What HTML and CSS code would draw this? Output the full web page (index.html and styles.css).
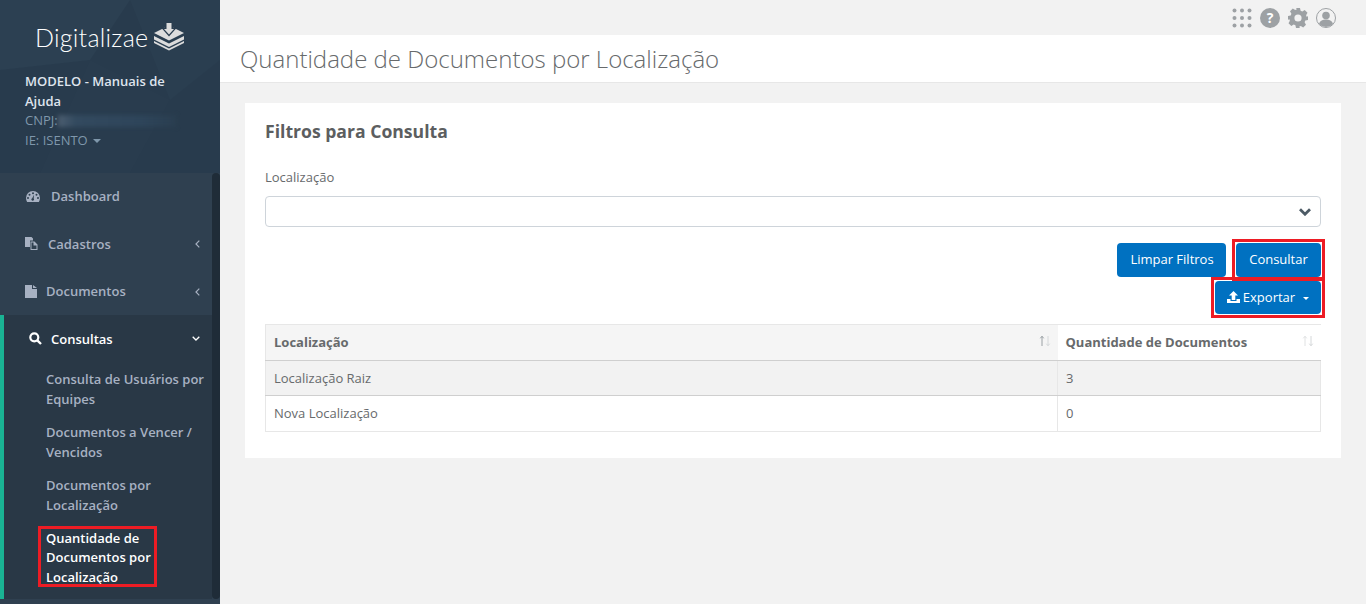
FILE: index.html
```html
<!DOCTYPE html>
<html lang="pt-BR">
<head>
  <meta charset="UTF-8">
  <title>Quantidade de Documentos por Localização</title>
  <link rel="stylesheet" href="styles.css">
</head>
<body>
  <aside class="sidebar">
    <div class="brand">
      <svg class="brand-bg" viewBox="0 0 220 173" preserveAspectRatio="none">
        <polygon points="0,0 130,0 90,60 0,70" fill="#2c4052"/>
        <polygon points="130,0 220,0 220,60 170,100" fill="#2a3e50"/>
        <polygon points="90,60 170,100 130,173 40,173" fill="#293c4e"/>
      </svg>
      <div class="logo">
        <span class="logo-text">Digitalizae</span>
        <svg class="logo-icon" viewBox="0 0 32 28">
          <polygon points="1,10 16,2.500 31,10 16,17.500" fill="#dcdcdc"/>
          <polygon points="12,0 20,0 20,4.500 24,4.500 16,13.500 8,4.500 12,4.500" fill="#2a3d4f"/>
          <polygon points="13.500,0 18.500,0 18.500,6 21,6 16,11.500 11,6 13.500,6" fill="#dcdcdc"/>
          <polygon points="1,13 16,20.500 31,13 31,16.500 16,24 1,16.500" fill="#dcdcdc"/>
          <polygon points="1,18 16,25.500 31,18 31,20 16,27.500 1,20" fill="#dcdcdc"/>
        </svg>
      </div>
      <div class="company">
        <strong>MODELO - Manuais de Ajuda</strong>
        <div class="cnpj">CNPJ:<span class="smear"></span></div>
        <div>IE: ISENTO <span class="caret"></span></div>
      </div>
    </div>
    <div class="nav-wrap">
      <nav class="nav">
        <a class="nav-item">
          <svg class="ic ic-dash" viewBox="0 0 14 11"><path fill-rule="evenodd" d="M7 0a7 7 0 0 1 7 7c0 1.500-.4 2.800-1.100 4H1.100A7.800 7.800 0 0 1 0 7a7 7 0 0 1 7-7zM7 1.300a1 1 0 1 0 0 2 1 1 0 0 0 0-2zM3.500 2.800a1 1 0 1 0 0 2 1 1 0 0 0 0-2zM2 6a1 1 0 1 0 0 2 1 1 0 0 0 0-2zM12 6a1 1 0 1 0 0 2 1 1 0 0 0 0-2zM10.500 2.800a1 1 0 1 0 0 2 1 1 0 0 0 0-2zM8 3.800 6.200 7.200a1.300 1.300 0 1 0 1.500.4z" fill="#a7b1c2"/></svg>
          <span class="lbl lbl-dash">Dashboard</span>
        </a>
        <a class="nav-item">
          <svg class="ic ic-copy" viewBox="0 0 13 13"><path d="M0 0h6.500l1.500 1.500V3.500H5V10H0z" fill="#a7b1c2"/><path d="M5.500 4.500H9.500l3 3v5.500h-7zM6.500 5.500v6.500h5V8.500H8.500v-3z" fill-rule="evenodd" fill="#a7b1c2"/></svg>
          <span class="lbl lbl-copy">Cadastros</span>
          <svg class="chev" viewBox="0 0 5 8"><path d="M4.300 .7 1 4l3.300 3.300" fill="none" stroke="#a7b1c2" stroke-width="1.200"/></svg>
        </a>
        <a class="nav-item">
          <svg class="ic ic-file" viewBox="0 0 12 13"><path d="M0 0h7v4h5v9H0zM8 0l4 3H8z" fill="#a7b1c2"/></svg>
          <span class="lbl lbl-file">Documentos</span>
          <svg class="chev" viewBox="0 0 5 8"><path d="M4.300 .7 1 4l3.300 3.300" fill="none" stroke="#a7b1c2" stroke-width="1.200"/></svg>
        </a>
        <div class="nav-open">
          <a class="nav-item active">
            <svg class="ic ic-search" viewBox="0 0 13 13"><circle cx="5.300" cy="5.300" r="4" fill="none" stroke="#fff" stroke-width="2.200"/><path d="m8.300 8.300 3.700 3.700" stroke="#fff" stroke-width="2.400"/></svg>
            <span class="lbl lbl-search">Consultas</span>
            <svg class="chev chev-down" viewBox="0 0 8 5"><path d="M.7.7 4 4 7.300.7" fill="none" stroke="#fff" stroke-width="1.300"/></svg>
          </a>
          <ul class="subnav">
            <li>Consulta de Usuários por Equipes</li>
            <li>Documentos a Vencer / Vencidos</li>
            <li>Documentos por Localização</li>
            <li class="current"><span class="mark">Quantidade de Documentos por Localização</span></li>
          </ul>
        </div>
      </nav>
      <div class="scroll-thumb"></div>
    </div>
  </aside>

  <main class="main">
    <div class="topbar">
      <svg class="top-ic" viewBox="0 0 20 20" width="20" height="20" fill="#9da1a4">
        <circle cx="2.500" cy="2.500" r="2"/><circle cx="10" cy="2.500" r="2"/><circle cx="17.500" cy="2.500" r="2"/>
        <circle cx="2.500" cy="10" r="2"/><circle cx="10" cy="10" r="2"/><circle cx="17.500" cy="10" r="2"/>
        <circle cx="2.500" cy="17.500" r="2"/><circle cx="10" cy="17.500" r="2"/><circle cx="17.500" cy="17.500" r="2"/>
      </svg>
      <span class="help">?</span>
      <svg class="top-ic" viewBox="0 0 20 20" width="20" height="20"><path fill="#9da1a4" fill-rule="evenodd" d="M8 0h4l.6 2.700 1.700.7L16.700 2l2.800 2.800-1.400 2.400.7 1.700L20 8v4l-2.700.6-.7 1.700 1.400 2.400-2.800 2.800-2.400-1.400-1.700.7L12 20H8l-.6-2.700-1.700-.7-2.400 1.400L.5 15.200l1.400-2.400-.7-1.700L0 12V8l2.700-.6.7-1.700L2 3.300 4.800.5l2.400 1.400 1.700-.7zM10 6.400a3.600 3.600 0 1 0 0 7.200 3.600 3.600 0 0 0 0-7.200z"/></svg>
      <svg class="top-ic" viewBox="0 0 20 20" width="20" height="20"><circle cx="10" cy="10" r="9.500" fill="none" stroke="#9da1a4"/><circle cx="10" cy="7.500" r="3.800" fill="#9da1a4"/><path d="M3 16c1-3.500 4-4.500 7-4.500s6 1 7 4.500a9.500 9.500 0 0 1-14 0z" fill="#9da1a4"/></svg>
    </div>
    <header class="page-title">
      <h1>Quantidade de Documentos por Localização</h1>
    </header>
    <section class="content">
      <div class="card">
        <h2>Filtros para Consulta</h2>
        <label class="field-label">Localização</label>
        <div class="select">
          <svg viewBox="0 0 12 8" width="12" height="8"><path d="m1 1.200 5 5 5-5" fill="none" stroke="#4d5b66" stroke-width="2.800"/></svg>
        </div>
        <div class="actions">
          <button class="btn btn-limpar">Limpar Filtros</button>
          <span class="mark-btn"><button class="btn btn-consultar">Consultar</button></span>
        </div>
        <div class="actions actions-export">
          <span class="mark-btn"><button class="btn btn-exportar">
            <svg viewBox="0 0 13 12" width="13" height="12"><path d="M6.500 0 11 4.500H8.300V9H4.700V4.500H2zM0 8h3.500v2h6V8H13v4H0z" fill="#fff"/></svg>
            Exportar
            <span class="caret caret-white"></span>
          </button></span>
        </div>
        <table class="grid">
          <thead>
            <tr>
              <th class="sorted">Localização
                <svg class="sort" viewBox="0 0 12 12" width="12" height="12"><path d="M3 11V1.500M1.300 3.300 3 1.200l1.700 2.100" fill="none" stroke="#9aa0a4"/><path d="M9 1v9.500M7.300 8.700 9 10.800l1.700-2.100" fill="none" stroke="#d5d8da"/></svg>
              </th>
              <th class="col-qty">Quantidade de Documentos
                <svg class="sort" viewBox="0 0 12 12" width="12" height="12"><path d="M3 11V1.500M1.300 3.300 3 1.200l1.700 2.100" fill="none" stroke="#e0e2e3"/><path d="M9 1v9.500M7.300 8.700 9 10.800l1.700-2.100" fill="none" stroke="#d5d8da"/></svg>
              </th>
            </tr>
          </thead>
          <tbody>
            <tr class="odd"><td>Localização Raiz</td><td>3</td></tr>
            <tr class="even"><td>Nova Localização</td><td>0</td></tr>
          </tbody>
        </table>
      </div>
    </section>
  </main>
</body>
</html>
```

FILE: styles.css
```css
* {
  box-sizing: border-box;
}
html, body {
  height: 100%;
}
body {
  margin: 0;
  display: flex;
  height: 604px;
  overflow: hidden;
  background-color: #f2f2f2;
  font-family: "Open Sans", sans-serif;
  font-size: 13px;
  color: #676a6c;
}

/* sidebar */
.sidebar {
  width: 220px;
  flex: none;
  display: flex;
  flex-direction: column;
  background-color: #2f4050;
}
.brand {
  position: relative;
  height: 173px;
  flex: none;
  padding: 0 25px;
  background-color: #283b4d;
  overflow: hidden;
}
.brand-bg {
  position: absolute;
  top: 0;
  left: 0;
  width: 100%;
  height: 100%;
}
.logo, .company {
  position: relative;
}
.logo {
  display: flex;
  align-items: center;
  height: 38px;
  margin-top: 18px;
  margin-left: 10px;
}
.logo-text {
  font-family: Lato, sans-serif;
  font-weight: 300;
  font-size: 25px;
  letter-spacing: 0.25px;
  color: #fff;
  width: 118px;
  white-space: nowrap;
}
.logo-icon {
  width: 32px;
  height: 28px;
}
.company {
  margin-top: 16px;
  line-height: 19.5px;
  color: #7f97ab;
}
.company strong {
  display: block;
  font-weight: 600;
  color: #dfe4ed;
}
.cnpj {
  display: flex;
}
.smear {
  width: 118px;
  height: 12px;
  margin-top: 4px;
  background: linear-gradient(90deg, #4c5e70, #334a5f 15%, #2e455a 70%, #2a3e50);
  filter: blur(2px);
}
.caret {
  display: inline-block;
  margin-left: 2px;
  vertical-align: 2px;
  border-top: 4px solid #7f97ab;
  border-left: 4px solid transparent;
  border-right: 4px solid transparent;
}
.caret-white {
  margin-left: 4px;
  border-top: 3px solid #fff;
  border-left: 3px solid transparent;
  border-right: 3px solid transparent;
}

.nav-wrap {
  flex: 1;
  display: flex;
  min-height: 0;
}
.nav {
  width: 212px;
  flex: none;
  background-color: #2f4050;
  padding-bottom: 5px;
}
.nav > :first-child {
  margin-top: -0.5px;
}
.nav-item {
  display: flex;
  align-items: center;
  height: 47.5px;
  padding-left: 25px;
  font-weight: 600;
  color: #a7b1c2;
  position: relative;
}
.ic {
  flex: none;
}
.ic-dash { width: 14px; height: 11px; margin-left: 1px; }
.ic-copy { width: 13px; height: 13px; }
.ic-file { width: 12px; height: 13px; }
.ic-search { width: 13px; height: 13px; margin-left: 4px; }
.lbl-dash { margin-left: 11px; }
.lbl-copy { margin-left: 10px; }
.lbl-file { margin-left: 9px; }
.lbl-search { margin-left: 9px; }
.chev {
  position: absolute;
  right: 12px;
  top: 20px;
  width: 5px;
  height: 8px;
}
.chev-down {
  width: 8px;
  height: 5px;
  top: 21px;
}
.nav-open {
  height: 283.5px;
  background-color: #293846;
  border-left: 4px solid #1ab394;
}
.nav-open .nav-item {
  padding-left: 21px;
}
.nav-item.active {
  color: #fff;
}
.subnav {
  list-style: none;
  margin: 0;
  padding: 0;
  font-weight: 600;
  color: #a7b1c2;
  line-height: 20px;
}
.subnav li {
  padding: 6px 4px 7px 42px;
}
.subnav .current {
  color: #fff;
  padding-top: 7px;
  line-height: 19.5px;
}
.mark {
  display: block;
  width: 113px;
  height: 55px;
  margin-left: -5px;
  padding-left: 5px;
  outline: 3px solid #ed1c24;
}
.scroll-thumb {
  flex: 1;
  height: 426px;
  background-color: #1f2c38;
  border-radius: 4px;
}

/* main */
.main {
  flex: 1;
  min-width: 0;
  display: flex;
  flex-direction: column;
}
.topbar {
  height: 35px;
  flex: none;
  display: flex;
  justify-content: flex-end;
  align-items: center;
  gap: 8px;
  padding-right: 30px;
}
.help {
  width: 20px;
  height: 20px;
  border-radius: 50%;
  background-color: #9da1a4;
  color: #fff;
  font-weight: 700;
  font-size: 14px;
  line-height: 20px;
  text-align: center;
}
.page-title {
  height: 48px;
  flex: none;
  background-color: #fff;
  border-bottom: 1px solid #e7e7e7;
  padding-left: 20px;
}
h1 {
  margin: 0;
  font-weight: 300;
  font-size: 24px;
  line-height: 47px;
  color: #676a6c;
}
.content {
  padding: 20px 25px;
}
.card {
  background-color: #fff;
  height: 355px;
  padding: 15px 20px 0;
}
h2 {
  margin: 0;
  font-weight: 700;
  font-size: 17.6px;
  line-height: 26px;
  color: #5c5e60;
}
.field-label {
  display: block;
  margin-top: 23px;
  line-height: 20px;
}
.select {
  display: flex;
  justify-content: flex-end;
  align-items: center;
  height: 31px;
  margin-top: 9px;
  padding-right: 9px;
  border: 1px solid #ced4da;
  border-radius: 4px;
}
.actions {
  display: flex;
  justify-content: flex-end;
  gap: 10px;
  margin-top: 16px;
}
.actions-export {
  margin-top: 4px;
}
.mark-btn {
  display: flex;
  outline: 3px solid #ed1c24;
  outline-offset: 1px;
}
.btn {
  height: 34px;
  padding: 0 0 2px;
  border: none;
  border-radius: 4px;
  background-color: #0071c1;
  color: #fff;
  font-family: inherit;
  font-size: 13px;
}
.btn-limpar {
  width: 109px;
  padding-left: 1px;
}
.btn-consultar {
  width: 85px;
}
.btn-exportar {
  width: 106px;
  height: 33px;
}
.btn-exportar svg {
  vertical-align: -1px;
  margin-right: -1px;
}
.grid {
  width: 100%;
  margin-top: 10px;
  border-collapse: collapse;
  table-layout: fixed;
}
.grid th, .grid td {
  border: 1px solid #e7e7e7;
  padding: 0 8px;
  text-align: left;
}
.grid th {
  position: relative;
  height: 36px;
  padding-bottom: 2px;
  font-weight: 700;
  border-bottom-color: #cfcfcf;
  color: #676a6c;
}
.grid th.sorted {
  background-color: #f5f5f5;
  border-right: none;
}
.grid th.col-qty {
  width: 263px;
  border-left: none;
  border-right: none;
}
.grid .odd td {
  height: 35px;
  background-color: #f2f2f2;
  border-bottom-color: #cfcfcf;
}
.grid .even td {
  height: 36px;
  padding-bottom: 2px;
}
.sort {
  position: absolute;
  right: 7px;
  top: 10px;
}
```
